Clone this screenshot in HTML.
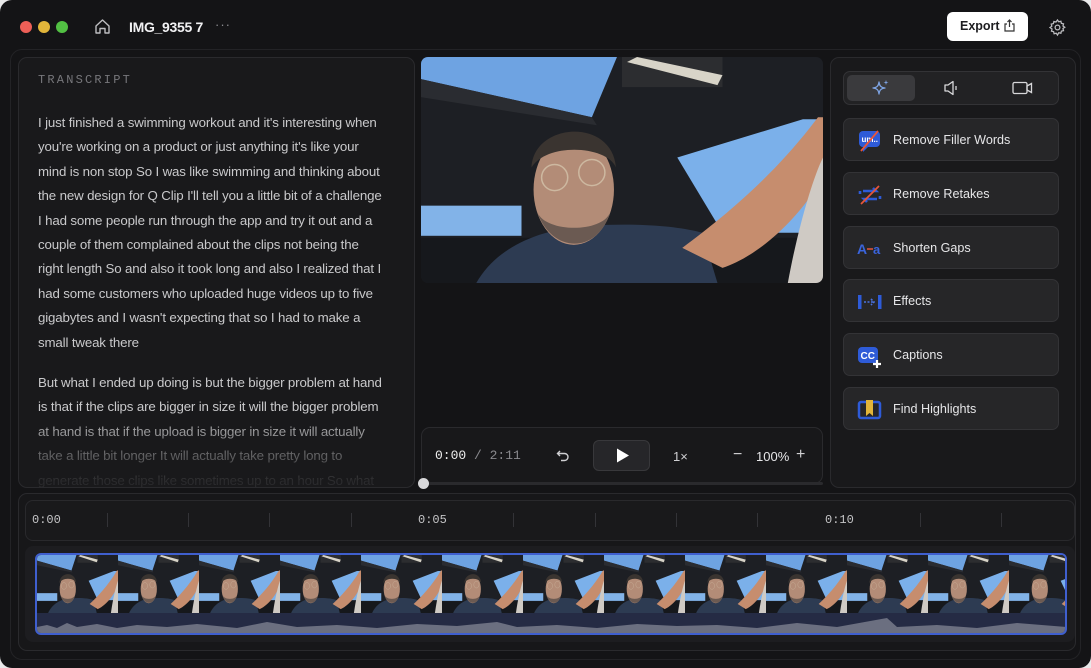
<!DOCTYPE html>
<html><head><meta charset="utf-8"><style>
*{margin:0;padding:0;box-sizing:border-box}
body{width:1091px;height:668px;background:#e9e9ea;font-family:"Liberation Sans",sans-serif;overflow:hidden;position:relative}
.win{position:absolute;left:0;top:0;width:1091px;height:668px;background:#141416;border-radius:12px;overflow:hidden}
.abs{position:absolute}
.panel{position:absolute;background:#19191b;border:1px solid #2a2a2d;border-radius:9px}
.dot{position:absolute;top:21px;width:12px;height:12px;border-radius:50%}
.tr{left:38px;top:111px;font-size:13.3px;line-height:24.4px;color:#c9c9cb;letter-spacing:-0.15px;white-space:nowrap}
.btn{position:absolute;left:843px;width:216px;height:43px;background:#262628;border:1px solid #333336;border-radius:7px;color:#e6e6e8;font-size:12.6px}
.btn span{position:absolute;left:49px;top:14px}
.btn svg{position:absolute;left:13px;top:9px}
.tick{position:absolute;top:513px;width:1px;height:14px;background:#333337}
.rl{position:absolute;top:513px;font-family:"Liberation Mono",monospace;font-size:12px;color:#c4c4c6}
</style></head><body>
<div class="win">
<svg width="0" height="0" style="position:absolute"><defs>
<symbol id="scene" viewBox="0 0 400 225" preserveAspectRatio="none">
<rect width="400" height="225" fill="#1d1f24"/>
<polygon points="0,0 195,0 170,60 0,22" fill="#6ea3e2"/>
<polygon points="0,22 170,60 175,68 0,40" fill="#2a2c31"/>
<polygon points="255,100 380,62 400,62 400,175 300,175" fill="#7bb0ea"/>
<rect x="0" y="148" width="100" height="30" fill="#82b3e8"/>
<rect x="200" y="0" width="100" height="30" fill="#2c2d30"/>
<polygon points="205,5 295,28 300,18 215,0" fill="#d8d4c8"/>
<rect x="0" y="180" width="400" height="45" fill="#16181c"/>
<path d="M55 225 C75 190 115 172 165 168 C215 165 255 168 280 175 L295 225Z" fill="#2d3b52"/>
<path d="M260 190 C300 160 350 120 395 60 L400 60 L400 120 C370 170 330 200 300 210Z" fill="#c68d6e"/>
<path d="M365 225 C375 170 390 120 400 100 L400 225Z" fill="#cfcac4"/>
<ellipse cx="152" cy="132" rx="40" ry="55" fill="#b38c77"/>
<path d="M110 110 C112 65 190 60 194 110 C185 88 125 85 110 110Z" fill="#3a3430"/>
<path d="M116 155 C130 195 175 197 188 155 C180 175 125 175 116 155Z" fill="#6b5a52"/>
<circle cx="133" cy="120" r="13" fill="none" stroke="#cdb8a0" stroke-width="1.5"/>
<circle cx="170" cy="115" r="13" fill="none" stroke="#cdb8a0" stroke-width="1.5"/>
</symbol>
</defs></svg>

<div class="dot" style="left:20px;background:#ed5f57"></div>
<div class="dot" style="left:38px;background:#e2b53a"></div>
<div class="dot" style="left:56px;background:#52c043"></div>
<svg class="abs" style="left:94px;top:18px" width="17" height="17" viewBox="0 0 17 17" fill="none" stroke="#bdbdc0" stroke-width="1.4" stroke-linejoin="round"><path d="M2 8 L8.5 2 L15 8 V15 H11 V10.5 H6 V15 H2Z"/></svg>
<div class="abs" style="left:129px;top:19px;font-size:14px;font-weight:bold;color:#f2f2f4;letter-spacing:-0.3px">IMG_9355 7</div>
<div class="abs" style="left:215px;top:17px;font-size:13px;color:#8c8c90;letter-spacing:1px">···</div>
<div class="abs" style="left:947px;top:12px;width:81px;height:29px;background:#fff;border-radius:6px"></div>
<div class="abs" style="left:960px;top:19px;font-size:12.5px;font-weight:bold;color:#1d1d20">Export</div>
<svg class="abs" style="left:1003px;top:19px" width="13" height="13" viewBox="0 0 13 13" fill="none" stroke="#333" stroke-width="1.2"><path d="M4 5H2V12H11V5H9M6.5 8V1M4.5 3L6.5 1L8.5 3"/></svg>
<svg class="abs" style="left:1048px;top:18px" width="19" height="19" viewBox="0 0 24 24" fill="none" stroke="#bdbdc0" stroke-width="1.6"><circle cx="12" cy="12" r="3"/><path d="M12 2.5l1.6 2.3 2.7-.7.6 2.7 2.7.6-.7 2.7 2.3 1.6-2.3 1.6.7 2.7-2.7.6-.6 2.7-2.7-.7L12 21.5l-1.6-2.3-2.7.7-.6-2.7-2.7-.6.7-2.7L2.5 12l2.3-1.6-.7-2.7 2.7-.6.6-2.7 2.7.7Z"/></svg>

<div class="abs" style="left:10px;top:49px;width:1071px;height:611px;border:1px solid #232326;border-radius:12px"></div>

<div class="panel" style="left:18px;top:57px;width:397px;height:431px;overflow:hidden"></div>
<div class="abs" style="left:38px;top:73px;font-family:'Liberation Mono',monospace;font-size:12px;letter-spacing:2.2px;color:#77777b">TRANSCRIPT</div>
<div class="abs tr" style="overflow:hidden;height:376px;-webkit-mask-image:linear-gradient(#000 300px,rgba(0,0,0,0.4) 345px,rgba(0,0,0,0.1) 370px)">I just finished a swimming workout and it's interesting when<br>you're working on a product or just anything it's like your<br>mind is non stop So I was like swimming and thinking about<br>the new design for Q Clip I'll tell you a little bit of a challenge<br>I had some people run through the app and try it out and a<br>couple of them complained about the clips not being the<br>right length So and also it took long and also I realized that I<br>had some customers who uploaded huge videos up to five<br>gigabytes and I wasn't expecting that so I had to make a<br>small tweak there<div style="height:16px"></div>But what I ended up doing is but the bigger problem at hand<br>is that if the clips are bigger in size it will the bigger problem<br>at hand is that if the upload is bigger in size it will actually<br>take a little bit longer It will actually take pretty long to<br>generate those clips like sometimes up to an hour So what</div>

<svg class="abs" style="left:421px;top:57px;border-radius:7px" width="402" height="226"><use href="#scene" width="402" height="226"/></svg>

<div class="panel" style="left:421px;top:427px;width:402px;height:57px;background:#18181a"></div>
<div class="abs" style="left:435px;top:448px;font-family:'Liberation Mono',monospace;font-size:13px;color:#eee">0:00 <span style="color:#8a8a8e">/ 2:11</span></div>
<svg class="abs" style="left:556px;top:449px" width="14" height="14" viewBox="0 0 14 14" fill="none" stroke="#cfcfd2" stroke-width="1.4"><path d="M4 2L1.5 4.5L4 7M1.5 4.5H8.5A3.5 3.5 0 0 1 8.5 11.5H5"/></svg>
<div class="abs" style="left:593px;top:440px;width:57px;height:31px;background:#262629;border:1px solid #38383b;border-radius:6px"></div>
<svg class="abs" style="left:616px;top:448px" width="14" height="15" viewBox="0 0 14 15"><path d="M1 0.5L13 7.5L1 14.5Z" fill="#fff"/></svg>
<div class="abs" style="left:673px;top:449px;font-size:13px;color:#cfcfd2">1×</div>
<div class="abs" style="left:733px;top:446px;font-size:16px;color:#cfcfd2">−</div>
<div class="abs" style="left:756px;top:449px;font-size:13px;color:#e6e6e8">100%</div>
<div class="abs" style="left:796px;top:446px;font-size:16px;color:#cfcfd2">+</div>
<div class="abs" style="left:421px;top:482px;width:402px;height:3px;background:#2a2a2d;border-radius:2px"></div>
<div class="abs" style="left:418px;top:478px;width:11px;height:11px;border-radius:50%;background:#d8d8da"></div>

<div class="panel" style="left:830px;top:57px;width:246px;height:431px"></div>
<div class="abs" style="left:843px;top:71px;width:216px;height:34px;background:#222224;border:1px solid #333336;border-radius:7px"></div>
<div class="abs" style="left:847px;top:75px;width:68px;height:26px;background:#3a3a3d;border-radius:5px"></div>
<svg class="abs" style="left:871px;top:79px" width="20" height="18" viewBox="0 0 20 18" fill="none" stroke="#7ea4e4" stroke-width="1.3" stroke-linejoin="round"><path d="M8 3C8.5 7 10 8.5 14 9C10 9.5 8.5 11 8 15C7.5 11 6 9.5 2 9C6 8.5 7.5 7 8 3Z"/><path d="M15 1L15.6 3L17.5 3.5L15.6 4L15 6L14.4 4L12.5 3.5L14.4 3Z" fill="#7ea4e4" stroke="none"/></svg>
<svg class="abs" style="left:943px;top:80px" width="18" height="16" viewBox="0 0 18 16" fill="none" stroke="#d8d8da" stroke-width="1.3" stroke-linejoin="round"><path d="M2 5H5L10 1.5V14.5L5 11H2Z"/><path d="M13 6V10"/></svg>
<svg class="abs" style="left:1012px;top:81px" width="21" height="14" viewBox="0 0 21 14" fill="none" stroke="#d8d8da" stroke-width="1.3"><rect x="1" y="1.5" width="14" height="11" rx="1.5"/><path d="M15 5L19.5 2.5V11.5L15 9Z"/></svg>

<div class="btn" style="top:118px"><svg width="26" height="26" viewBox="0 0 26 26"><rect x="2" y="3" width="21" height="16" rx="4" fill="#2e5bd8"/><path d="M6 19L6 24L11 19Z" fill="#2e5bd8"/><text x="4.5" y="14" font-size="8" font-weight="bold" fill="#fff" font-family="Liberation Sans">um..</text><path d="M4 23L21 3" stroke="#e8553a" stroke-width="1.8"/></svg><span>Remove Filler Words</span></div>
<div class="btn" style="top:172px"><svg width="26" height="26" viewBox="0 0 26 26" fill="none"><path d="M6 9H19L16 6M20 17H7L10 20" stroke="#2e5bd8" stroke-width="2.6"/><path d="M3 12V9M23 14V17" stroke="#2e5bd8" stroke-width="2.6"/><path d="M4 22L22 4" stroke="#e8553a" stroke-width="1.8"/></svg><span>Remove Retakes</span></div>
<div class="btn" style="top:226px"><svg width="26" height="26" viewBox="0 0 26 26"><text x="0" y="18" font-size="14" font-weight="bold" fill="#3a64dc" font-family="Liberation Sans">A</text><text x="16" y="18" font-size="13" font-weight="bold" fill="#3a64dc" font-family="Liberation Sans">a</text><path d="M10 13H16" stroke="#e8553a" stroke-width="1.5"/></svg><span>Shorten Gaps</span></div>
<div class="btn" style="top:279px"><svg width="26" height="26" viewBox="0 0 26 26"><rect x="1" y="6" width="3.5" height="14" fill="#2e5bd8"/><rect x="21" y="6" width="3.5" height="14" fill="#2e5bd8"/><path d="M7 13H17M14 10L17 13L14 16" stroke="#4a72e0" stroke-width="1.6" fill="none" stroke-dasharray="2 1.5"/></svg><span>Effects</span></div>
<div class="btn" style="top:333px"><svg width="26" height="26" viewBox="0 0 26 26"><rect x="1" y="4" width="20" height="16" rx="4" fill="#2e5bd8"/><text x="3.5" y="16" font-size="10" font-weight="bold" fill="#fff" font-family="Liberation Sans">CC</text><path d="M20 17V25M16 21H24" stroke="#fff" stroke-width="2.2"/></svg><span>Captions</span></div>
<div class="btn" style="top:387px"><svg width="26" height="26" viewBox="0 0 26 26"><rect x="2" y="5" width="21" height="16" rx="2" fill="none" stroke="#2e5bd8" stroke-width="2.5"/><path d="M9 3H16V19L12.5 16L9 19Z" fill="#e2b53a"/></svg><span>Find Highlights</span></div>

<div class="panel" style="left:18px;top:493px;width:1058px;height:158px;background:#171719"></div>
<div class="abs" style="left:25px;top:500px;width:1050px;height:41px;border:1px solid #29292c;border-radius:8px;background:#19191b"></div>
<div class="rl" style="left:32px">0:00</div><div class="rl" style="left:418px">0:05</div><div class="rl" style="left:825px">0:10</div>
<div class="tick" style="left:107px"></div><div class="tick" style="left:188px"></div><div class="tick" style="left:269px"></div><div class="tick" style="left:351px"></div>
<div class="tick" style="left:513px"></div><div class="tick" style="left:595px"></div><div class="tick" style="left:676px"></div><div class="tick" style="left:757px"></div>
<div class="tick" style="left:920px"></div><div class="tick" style="left:1001px"></div>
<div class="abs" style="left:25px;top:546px;width:1050px;height:96px;background:#1d1d20;border-radius:8px"></div>
<div class="abs" style="left:35px;top:553px;width:1032px;height:82px;border:2px solid #3f5fcf;border-radius:6px;background:#252b44;overflow:hidden">
<svg width="1030" height="58" style="display:block">
<use href="#scene" x="0" width="81" height="58"/><use href="#scene" x="81" width="81" height="58"/><use href="#scene" x="162" width="81" height="58"/><use href="#scene" x="243" width="81" height="58"/><use href="#scene" x="324" width="81" height="58"/><use href="#scene" x="405" width="81" height="58"/><use href="#scene" x="486" width="81" height="58"/><use href="#scene" x="567" width="81" height="58"/><use href="#scene" x="648" width="81" height="58"/><use href="#scene" x="729" width="81" height="58"/><use href="#scene" x="810" width="81" height="58"/><use href="#scene" x="891" width="81" height="58"/><use href="#scene" x="972" width="81" height="58"/>
</svg>
<svg width="1030" height="22" style="display:block"><path d="M0 22V14L10 12L20 15L30 10L40 14L60 11L80 15L100 12L130 14L160 11L200 15L230 9L260 14L300 12L340 15L380 11L420 13L460 9L480 14L520 12L560 15L600 11L640 13L680 12L720 15L760 10L800 14L850 5L860 14L900 12L940 15L980 10L1030 14V22Z" fill="#6b6f80"/></svg>
</div>
</div>
</body></html>
